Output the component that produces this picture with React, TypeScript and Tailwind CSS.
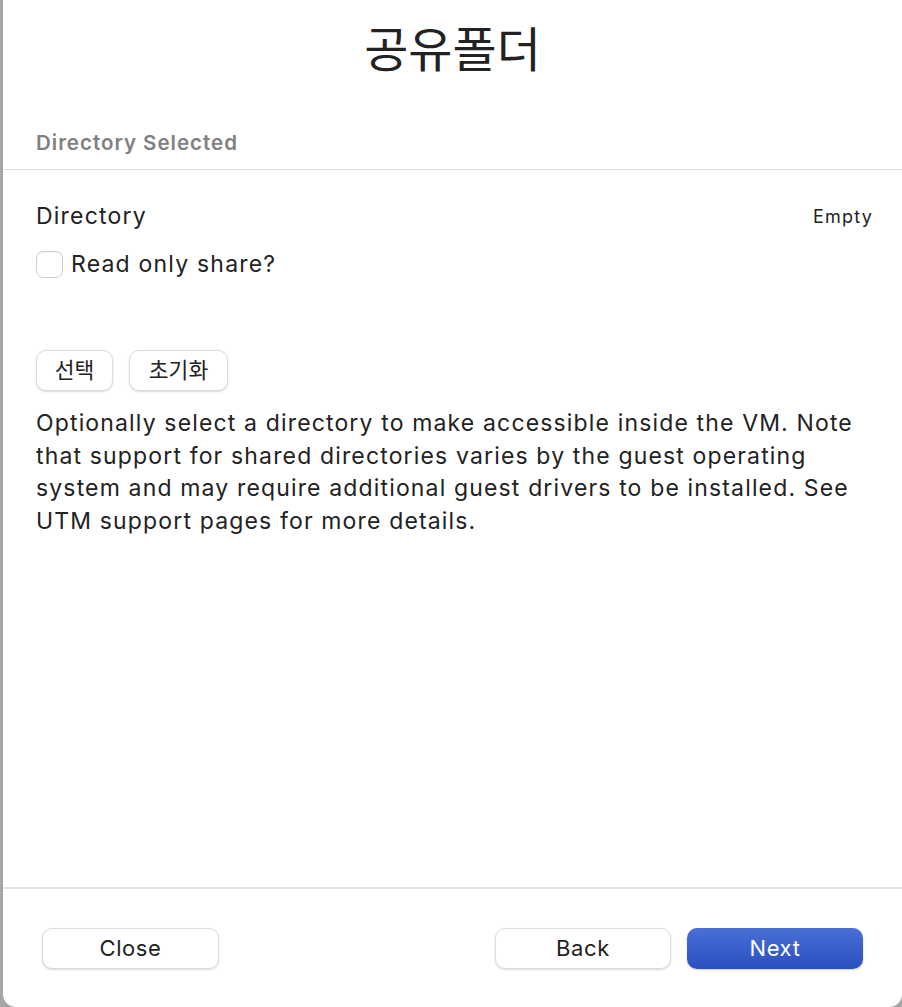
import { useState } from 'react';

const font = { fontFamily: 'Inter, "Noto Sans CJK KR", sans-serif' };

function PlainButton({ children, className = '' }: { children: React.ReactNode; className?: string }) {
  return (
    <button
      type="button"
      className={`flex h-[41px] items-center justify-center rounded-[10px] border border-[#dcdcdc] bg-white text-[#222] shadow-[0_1px_2px_rgb(0_0_0/0.15)] ${className}`}
    >
      {children}
    </button>
  );
}

export default function App() {
  const [readOnly, setReadOnly] = useState(false);

  return (
    <div className="h-[1007px] w-[902px] bg-[#a6a6a6]" style={font}>
      <div className="ml-[3px] flex h-full flex-col rounded-b-[13px] bg-white">
        <h1 className="pt-[18px] text-center text-[48px] leading-[64px] text-[#222]">공유폴더</h1>

        <div className="mt-[49px] px-[33px] text-[20.5px] font-semibold leading-[24px] tracking-[1px] text-[#808080]">
          Directory Selected
        </div>
        <div className="mt-[14px] h-px bg-[#dedede]" />

        <section className="pl-[33px] pr-[29px] pt-[31px]">
          <div className="flex items-center justify-between">
            <span className="text-[23px] leading-[30px] tracking-[1.2px] text-[#222]">Directory</span>
            <span className="text-[18px] tracking-[1.2px] text-[#222]">Empty</span>
          </div>

          <label className="mt-[18px] flex items-center gap-[8px]">
            <button
              type="button"
              onClick={() => setReadOnly(!readOnly)}
              className="h-[27px] w-[27px] rounded-[7px] border border-[#cfcfcf] bg-white shadow-[inset_0_1px_1px_rgb(0_0_0/0.05)]"
            >
              {readOnly ? <span className="text-[18px] text-[#2d55c6]">✓</span> : null}
            </button>
            <span className="text-[23px] leading-[30px] tracking-[1.2px] text-[#222]">Read only share?</span>
          </label>

          <div className="mt-[71px] flex gap-[16px]">
            <PlainButton className="w-[77px] text-[21.5px]">선택</PlainButton>
            <PlainButton className="w-[99px] text-[21.5px]">초기화</PlainButton>
          </div>

          <p className="mt-[16px] pr-[2px] text-[23px] leading-[32.5px] tracking-[1.15px] text-[#222]">
            Optionally select a directory to make accessible inside the VM. Note that support for shared
            directories varies by the guest operating system and may require additional guest drivers to
            be installed. See UTM support pages for more details.
          </p>
        </section>

        <div className="flex-1" />
        <div className="h-[2px] bg-[#e3e3e3]" />

        <footer className="flex items-center px-[39px] pb-[38px] pt-[39px]">
          <PlainButton className="w-[177px] text-[22px] tracking-[0.6px]">Close</PlainButton>
          <div className="flex-1" />
          <PlainButton className="w-[176px] text-[22px] tracking-[0.6px]">Back</PlainButton>
          <button
            type="button"
            className="ml-[16px] flex h-[41px] w-[176px] items-center justify-center rounded-[10px] bg-gradient-to-b from-[#4a6fd6] to-[#2a4fc0] text-[22px] tracking-[0.6px] text-white shadow-[0_1px_2px_rgb(0_0_0/0.2)]"
          >
            Next
          </button>
        </footer>
      </div>
    </div>
  );
}
